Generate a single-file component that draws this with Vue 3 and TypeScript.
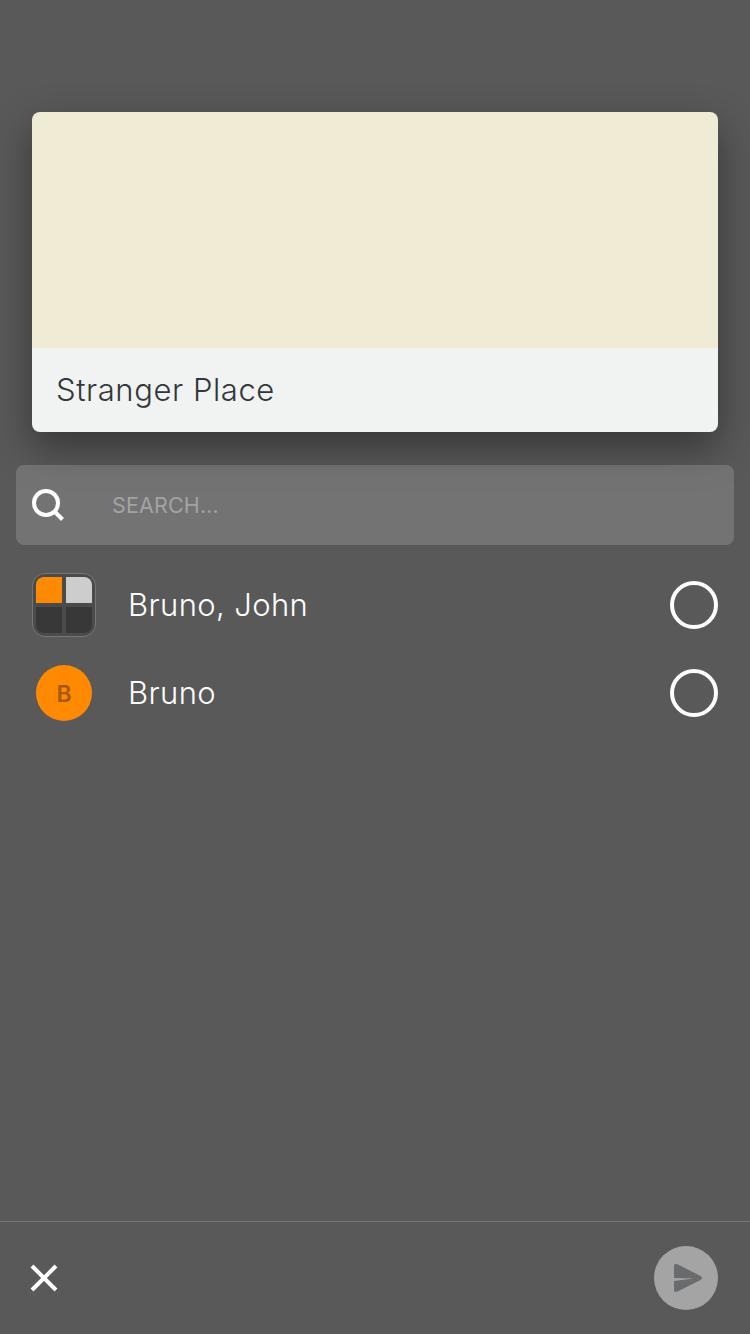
<script setup lang="ts">
import { ref } from 'vue'

interface Recipient {
  name: string
  kind: 'group' | 'person'
}

const query = ref<string>('')
const selected = ref<string[]>([])
const recipients: Recipient[] = [
  { name: 'Bruno, John', kind: 'group' },
  { name: 'Bruno', kind: 'person' },
]

function toggle(name: string): void {
  selected.value = selected.value.includes(name)
    ? selected.value.filter((n) => n !== name)
    : [...selected.value, name]
}
</script>

<template>
  <main class="screen">
    <section class="card">
      <div class="map"></div>
      <div class="place"><span class="place-name">Stranger Place</span></div>
    </section>

    <label class="search">
      <svg class="search-icon" width="34" height="34" viewBox="0 0 34 34">
        <circle cx="14" cy="15" r="12" />
        <path d="M22.500 23.500L30.500 31.500" />
      </svg>
      <input v-model="query" type="text" placeholder="SEARCH…" />
    </label>

    <ul class="list">
      <li v-for="r in recipients" :key="r.name" class="row" @click="toggle(r.name)">
        <div class="avatar">
          <div v-if="r.kind === 'group'" class="group">
            <i class="orange"></i><i class="light"></i><i></i><i></i>
          </div>
          <div v-else class="person">{{ r.name[0] }}</div>
        </div>
        <span class="name">{{ r.name }}</span>
        <span class="check" :class="{ on: selected.includes(r.name) }"></span>
      </li>
    </ul>

    <footer class="footer">
      <button class="close" aria-label="Close">
        <svg width="28" height="28" viewBox="0 0 28 28">
          <path d="M2 2L26 26M26 2L2 26" />
        </svg>
      </button>
      <button class="send" aria-label="Send">
        <svg width="64" height="64" viewBox="0 0 64 64">
          <path d="M20 32V20.500Q20 16.800 23.500 18.200L46.500 30Q49.500 32 46.500 34L23.500 45.600Q20 47.200 20 43.500V35L40 32.500Z" />
        </svg>
      </button>
    </footer>
  </main>
</template>

<style>
body {
  margin: 0;
  background: #595959;
}
</style>

<style scoped>
.screen {
  box-sizing: border-box;
  width: 750px;
  height: 1334px;
  padding-top: 112px;
  display: flex;
  flex-direction: column;
  overflow: hidden;
  background: #595959;
  color: #fff;
  font-family: Inter, "Liberation Sans", sans-serif;
}
.card {
  flex: none;
  margin: 0 32px;
  height: 320px;
  border-radius: 8px;
  box-shadow: 0 16px 40px rgba(0, 0, 0, 0.4);
}
.map {
  height: 236px;
  border-radius: 8px 8px 0 0;
  background: #f0ebd5;
}
.place {
  box-sizing: border-box;
  height: 84px;
  padding-left: 24px;
  display: flex;
  align-items: center;
  border-radius: 0 0 8px 8px;
  background: #f0f3f2;
  color: #33373a;
}
.place-name,
.name {
  font-size: 31px;
  font-weight: 300;
  line-height: 40px;
  white-space: nowrap;
}
.place-name {
  letter-spacing: 0.58px;
}
.name {
  flex: 1;
  letter-spacing: 0.38px;
}
.search {
  box-sizing: border-box;
  flex: none;
  height: 80px;
  margin: 33px 16px 0;
  padding: 0 16px;
  display: flex;
  align-items: center;
  border-radius: 8px;
  background: rgba(255, 255, 255, 0.16);
}
.search-icon {
  flex: none;
  margin-right: 46px;
  fill: none;
  stroke: #fff;
  stroke-width: 4;
}
input {
  flex: 1;
  min-width: 0;
  height: 40px;
  padding: 0;
  border: 0;
  outline: 0;
  background: transparent;
  color: #fff;
  font: 400 21.500px Inter, "Liberation Sans", sans-serif;
  letter-spacing: 0.15px;
}
input::placeholder {
  color: #a3a3a3;
  opacity: 1;
}
.list {
  flex: 1;
  margin: 16px 0 0;
  padding: 0;
  list-style: none;
}
.row {
  height: 88px;
  padding: 0 32px;
  display: flex;
  align-items: center;
}
.avatar {
  width: 64px;
  height: 64px;
  margin-right: 32px;
  display: flex;
  align-items: center;
  justify-content: center;
}
.group {
  box-sizing: border-box;
  width: 64px;
  height: 64px;
  padding: 3px;
  display: grid;
  grid-template-columns: 26px 26px;
  grid-template-rows: 26px 26px;
  gap: 4px;
  border: 1px solid #767676;
  border-radius: 13px;
  background: #4b4b4b;
}
.group i {
  background: #383838;
}
.group .orange {
  background: #ff8900;
  border-top-left-radius: 8px;
}
.group .light {
  background: #cdcdcd;
  border-top-right-radius: 8px;
}
.group i:nth-child(3) {
  border-bottom-left-radius: 8px;
}
.group i:nth-child(4) {
  border-bottom-right-radius: 8px;
}
.person {
  width: 56px;
  height: 56px;
  border-radius: 50%;
  background: #ff8900;
  color: #a65900;
  font-size: 23px;
  font-weight: 600;
  line-height: 58px;
  text-align: center;
}
.check {
  box-sizing: border-box;
  width: 48px;
  height: 48px;
  border: 4px solid #fff;
  border-radius: 50%;
}
.check.on {
  background: #fff;
}
.footer {
  box-sizing: border-box;
  flex: none;
  height: 113px;
  padding: 0 32px 0 30px;
  display: flex;
  align-items: center;
  justify-content: space-between;
  border-top: 1px solid #777;
}
button {
  padding: 0;
  border: 0;
  background: none;
}
svg {
  display: block;
}
.close path {
  stroke: #fff;
  stroke-width: 4;
}
.send {
  border-radius: 50%;
  background: #a4a4a4;
}
.send path {
  fill: #696b6c;
}
</style>
